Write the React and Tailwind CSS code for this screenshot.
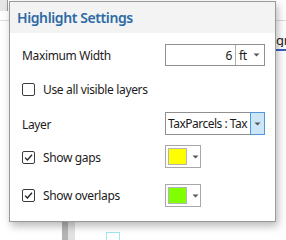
import React from "react";

const Caret = ({ className = "" }) => (
  <svg width="7" height="4" viewBox="0 0 7 4" className={className}>
    <path d="M0.5 0.5 L6.5 0.5 L3.5 3.5 Z" fill="#555" />
  </svg>
);

const Check = ({ checked }) => (
  <div className="w-[13px] h-[13px] border border-[#3c3c3c] rounded-[2px] bg-white flex items-center justify-center shrink-0">
    {checked && (
      <svg width="11" height="11" viewBox="0 0 11 11">
        <path d="M2 5.6 L4.4 8 L9 2.8" stroke="#222" strokeWidth="1.3" fill="none" />
      </svg>
    )}
  </div>
);

const ColorPick = ({ color }) => (
  <div className="w-[36px] h-[23px] border border-[#a8a8a8] bg-white flex items-center pl-[2px]">
    <div className="w-[19px] h-[17px] border border-[#b5b5b5]" style={{ backgroundColor: color }} />
    <Caret className="ml-[5px]" />
  </div>
);

export default function App() {
  return (
    <div
      className="relative w-[286px] h-[240px] bg-white overflow-hidden text-[12px] tracking-[-0.35px] text-[#1b1b1b]"
      style={{ fontFamily: '"Noto Sans", "Liberation Sans", sans-serif' }}
    >
      {/* background content behind popup */}
      <div className="absolute left-0 top-0 w-[8px] h-[11px] bg-[#e6e6e6] border-r border-[#9a9a9a]" />
      <div className="absolute left-0 top-[20px] w-[286px] h-px bg-[#dcdcdc]" />
      <div className="absolute left-[276px] top-[33px] w-[10px] overflow-hidden text-[13px] leading-[14px]">gr</div>
      <div className="absolute left-[276px] top-[49px] w-[10px] h-[2px] bg-[#3b5fc4]" />
      <div className="absolute left-[62px] top-[222px] w-[6px] h-[18px] bg-[#b4b4b4]" />
      <div className="absolute left-[68px] top-[222px] w-[7px] h-[18px] bg-[#e2e2e2]" />
      <div className="absolute left-[106px] top-[232px] w-[14px] h-[10px] border border-[#9ee8f0]" />

      {/* popup */}
      <div className="absolute left-[9px] top-[1px] w-[267px] bg-white border border-[#9a9a9a] shadow-[2px_4px_8px_rgba(0,0,0,0.28)] flex flex-col">
        <div className="h-[31px] bg-[#f3f3f3] flex items-center pl-[7px]">
          <span className="text-[14px] font-semibold text-[#2c6aa6] tracking-[-0.4px]">Highlight Settings</span>
        </div>

        <div className="flex flex-col pl-[12px] pr-[10px] pb-[14px]">
          <div className="mt-[10px] h-[23px] flex items-center justify-between">
            <span className="pt-[3px]">Maximum Width</span>
            <div className="w-[100px] h-[22px] border border-[#8f8f8f] flex bg-white">
              <div className="flex-1 flex items-center justify-end pr-[3px] pt-[2px] border-r border-[#b0b0b0]">6</div>
              <div className="w-[28px] flex items-center pl-[3px] pt-[2px]">
                ft
                <Caret className="ml-[6px] -mt-[1px]" />
              </div>
            </div>
          </div>

          <div className="mt-[12px] h-[23px] flex items-center gap-[8px]">
            <Check />
            <span>Use all visible layers</span>
          </div>

          <div className="mt-[11px] h-[23px] flex items-center justify-between">
            <span className="pt-[2px]">Layer</span>
            <div className="w-[100px] h-[23px] border border-[#8f8f8f] flex bg-white">
              <div className="flex-1 overflow-hidden whitespace-nowrap pl-[2px] flex items-center pt-[1px] tracking-[-0.5px]">TaxParcels : Tax</div>
              <div className="w-[15px] bg-[#cde6f7] border border-[#4f98dc] -my-px -mr-px flex items-center justify-center">
                <Caret />
              </div>
            </div>
          </div>

          <div className="mt-[10px] h-[23px] flex items-center justify-between">
            <div className="flex items-center gap-[8px] pt-[2px]">
              <Check checked />
              <span>Show gaps</span>
            </div>
            <div className="w-[100px]">
              <ColorPick color="#ffff00" />
            </div>
          </div>

          <div className="mt-[16px] h-[23px] flex items-center justify-between">
            <div className="flex items-center gap-[8px]">
              <Check checked />
              <span>Show overlaps</span>
            </div>
            <div className="w-[100px]">
              <ColorPick color="#80ff00" />
            </div>
          </div>
        </div>
      </div>
    </div>
  );
}
